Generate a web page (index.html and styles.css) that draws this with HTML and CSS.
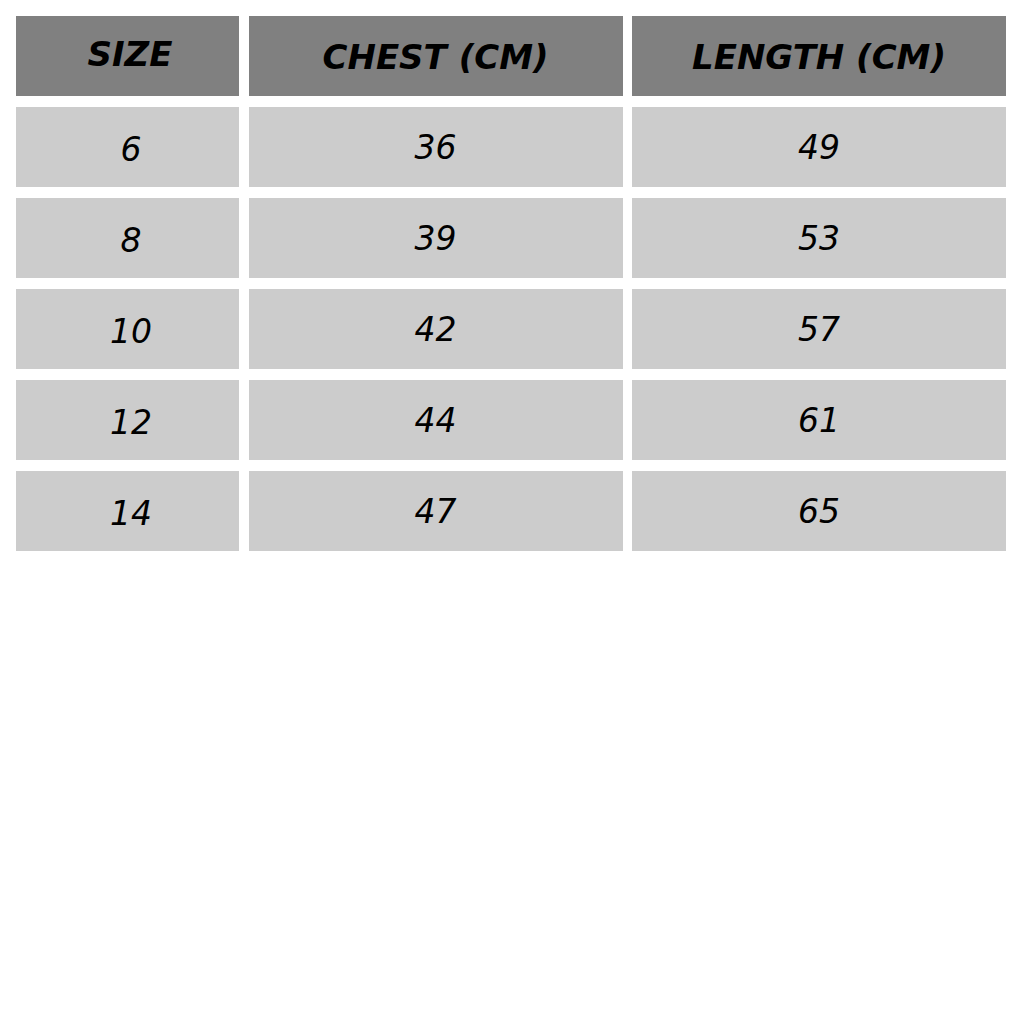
FILE: index.html
```html
<!DOCTYPE html>
<html>
<head>
<meta charset="utf-8">
<link rel="stylesheet" href="styles.css">
</head>
<body>
<div class="table">
  <div class="cell head first">SIZE</div>
  <div class="cell head">CHEST (CM)</div>
  <div class="cell head">LENGTH (CM)</div>

  <div class="cell first">6</div>
  <div class="cell">36</div>
  <div class="cell">49</div>

  <div class="cell first">8</div>
  <div class="cell">39</div>
  <div class="cell">53</div>

  <div class="cell first">10</div>
  <div class="cell">42</div>
  <div class="cell">57</div>

  <div class="cell first">12</div>
  <div class="cell">44</div>
  <div class="cell">61</div>

  <div class="cell first">14</div>
  <div class="cell">47</div>
  <div class="cell">65</div>
</div>
</body>
</html>
```
FILE: styles.css
```css
html, body {
  margin: 0;
  padding: 0;
  background: #ffffff;
}
body {
  padding: 16px 17px 0 16px;
  font-family: "DejaVu Sans", Verdana, sans-serif;
  font-style: italic;
  color: #000;
}
.table {
  display: grid;
  grid-template-columns: 223px 374px 374px;
  grid-auto-rows: 80px;
  column-gap: 9.5px;
  row-gap: 11px;
  width: 990px;
}
.cell {
  background: #cccccc;
  display: flex;
  align-items: center;
  justify-content: center;
  font-size: 33px;
  line-height: 1;
}
.cell.first {
  padding-left: 7px;
  padding-top: 4px;
}
.head {
  background: #808080;
  font-weight: bold;
  font-size: 34px;
  padding-top: 2px;
}
.head.first {
  padding-left: 5px;
  padding-top: 0;
  padding-bottom: 4px;
}
```
